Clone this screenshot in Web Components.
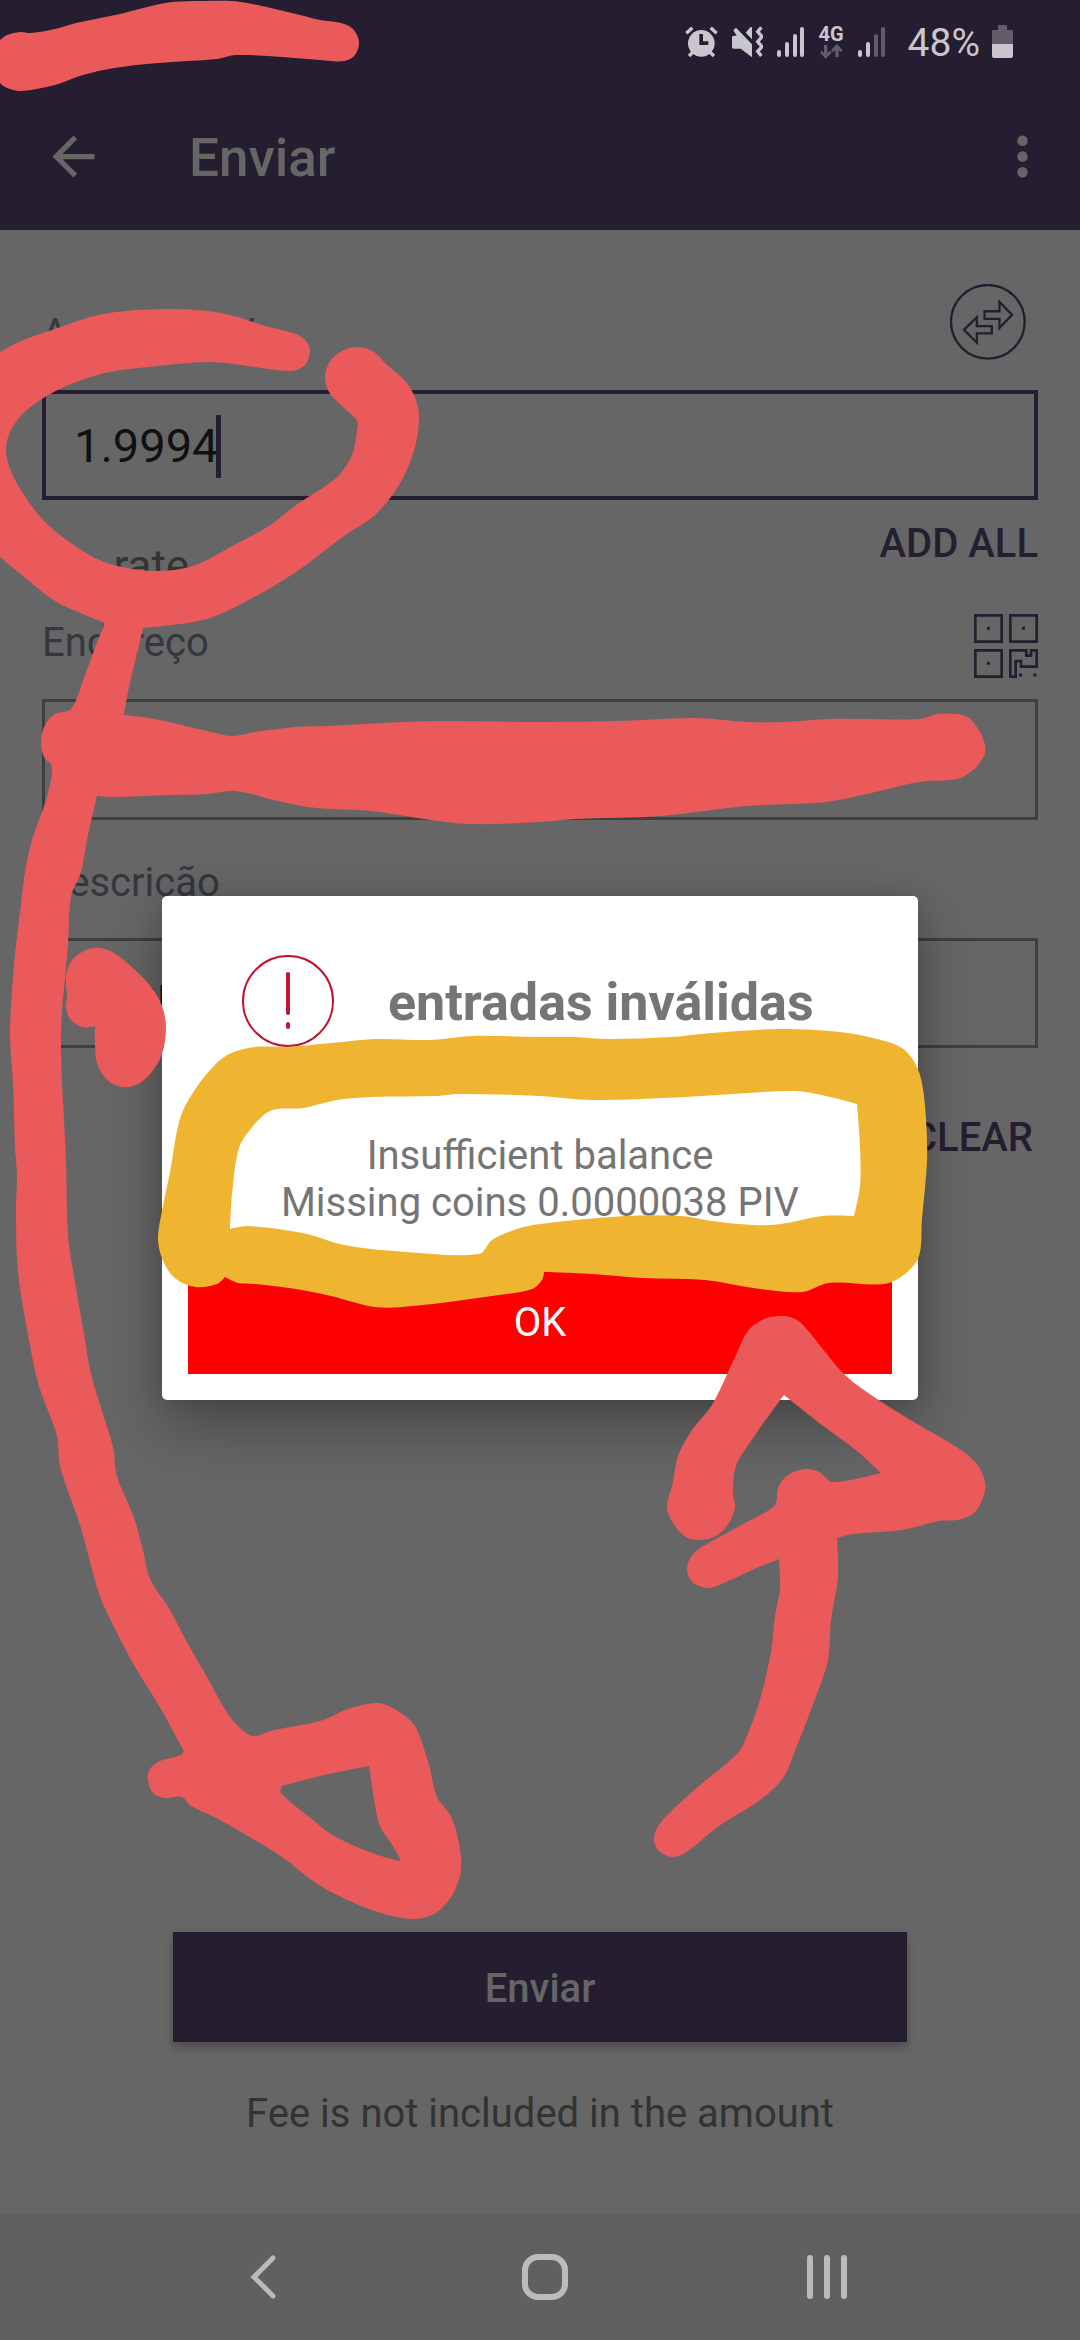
<!DOCTYPE html>
<html lang="pt">
<head>
<meta charset="utf-8">
<meta name="viewport" content="width=device-width, initial-scale=1">
<title>Enviar</title>
<style>
  body {
    margin: 0;
    font-family: Roboto, "Liberation Sans", sans-serif;
    background: #666;
  }
</style>
</head>
<body>
<send-screen></send-screen>

<script>
class StatusBar extends HTMLElement {
    constructor() {
        super();
        this.attachShadow({ mode: 'open' });
    }

    connectedCallback() {
        this.shadowRoot.innerHTML = `
      <style>
        :host {
          display: flex;
          align-items: center;
          justify-content: flex-end;
          height: 83px;
          padding-right: 67px;
          color: #cac6ce;
          background: #251e31;
        }

        svg {
          display: block;
          fill: currentColor;
        }

        .icons {
          display: flex;
          align-items: center;
          gap: 14px;
        }

        .net {
          display: flex;
          flex-direction: column;
          align-items: center;
          font-size: 20px;
          font-weight: 700;
          line-height: 20px;
        }

        .level {
          margin: 0 12px 0 23px;
          padding-top: 2px;
          font-size: 39px;
          line-height: 48px;
        }

        .off {
          fill: #635c6c;
        }
      </style>

      <div class="icons">
        <svg width="33" height="32" viewBox="0 0 99 96">
          <circle cx="49" cy="52" r="40"/>
          <path d="M4 22 22 5M77 5l18 17M12 90l12-12M74 78l13 12" fill="none" stroke="currentColor" stroke-width="10"/>
          <path d="M43 24h11v22h16v11H43z" fill="#251e31"/>
        </svg>
        <svg width="31" height="32" viewBox="0 0 93 96">
          <path d="M0 34q0-5 5-5h9l-10-16 8-8 48 50v39L26 68H5q-5 0-5-5zM41 20 55 4q5-3 5 3v33z"/>
          <path d="M88 4 77 17l13 15-13 15 13 15-13 14 11 14" fill="none" stroke="currentColor" stroke-width="10"/>
        </svg>
        <svg width="27" height="32" viewBox="0 0 27 32">
          <rect x="0" y="24" width="4" height="7" rx="2"/>
          <rect x="8" y="16" width="4" height="15" rx="2"/>
          <rect x="16" y="8" width="4" height="23" rx="2"/>
          <rect x="23" y="1" width="4" height="30" rx="2"/>
        </svg>
        <div class="net">4G
          <svg class="off" width="23" height="15" viewBox="0 0 69 45">
            <path d="M12 3h10v24l8-7 5 6-18 18L0 26l5-6 7 7zM46 39h10V18l7 7 5-6L51 0 33 19l5 6 8-7z"/>
          </svg>
        </div>
        <svg width="27" height="32" viewBox="0 0 27 32">
          <rect x="0" y="24" width="4" height="7" rx="2"/>
          <rect x="8" y="16" width="4" height="15" rx="2"/>
          <rect class="off" x="16" y="8" width="4" height="23" rx="2"/>
          <rect class="off" x="23" y="1" width="4" height="30" rx="2"/>
        </svg>
      </div>
      <span class="level">48%</span>
      <svg width="21" height="34" viewBox="0 0 21 34">
        <path class="off" d="M7 0h7q1 0 1 1v4h5q1 0 1 1v14H0V6q0-1 1-1h5V1q0-1 1-1z"/>
        <path d="M0 19h21v12q0 2-2 2H2q-2 0-2-2z"/>
      </svg>
    `;
    }
}

class AppBar extends HTMLElement {
    constructor() {
        super();
        this.attachShadow({ mode: 'open' });
    }

    connectedCallback() {
        this.shadowRoot.innerHTML = `
      <style>
        :host {
          display: flex;
          align-items: center;
          height: 147px;
          padding: 0 26px 0 42px;
          color: #666;
          background: #251e31;
        }

        button {
          display: block;
          padding: 0;
          border: 0;
          color: inherit;
          background: none;
        }

        svg {
          display: block;
          fill: currentColor;
        }

        h1 {
          flex: 1;
          margin: 0 0 0 84px;
          padding-top: 3px;
          font-size: 53px;
          font-weight: 500;
          line-height: 64px;
        }
      </style>

      <button type="button" aria-label="Voltar">
        <svg width="63" height="63" viewBox="0 0 24 24"><path d="M20 11H7.83l5.59-5.59L12 4l-8 8 8 8 1.410-1.410L7.830 13H20z"/></svg>
      </button>
      <h1><slot></slot></h1>
      <button type="button" aria-label="Mais opções">
        <svg width="63" height="63" viewBox="0 0 24 24"><path d="M12 8a2 2 0 100-4 2 2 0 000 4zm0 2a2 2 0 100 4 2 2 0 000-4zm0 6a2 2 0 100 4 2 2 0 000-4z"/></svg>
      </button>
    `;
    }
}

class FormField extends HTMLElement {
    constructor() {
        super();
        this.attachShadow({ mode: 'open' });
    }

    connectedCallback() {
        const value = this.getAttribute('value') || '';
        const active = this.hasAttribute('active');

        this.shadowRoot.innerHTML = `
      <style>
        :host {
          display: block;
        }

        .head {
          display: flex;
          align-items: flex-start;
          justify-content: space-between;
          margin-bottom: var(--head-gap, 29px);
        }

        label {
          padding-top: var(--label-top, 3px);
          font-size: 40px;
          line-height: 52px;
          color: #34373f;
        }

        .box {
          display: flex;
          align-items: center;
          box-sizing: border-box;
          height: var(--box-height, 110px);
          padding: 2px 29px 0;
          border: 3px solid #3f3f3f;
        }

        input {
          flex: 1;
          min-width: 0;
          padding: 0;
          border: 0;
          outline: 0;
          font: 47px/64px Roboto, "Liberation Sans", sans-serif;
          color: #111;
          background: none;
        }

        :host([active]) .box {
          padding: 2px 28px 0;
          border: 4px solid #251e31;
        }

        :host([active]) input {
          flex: none;
          field-sizing: content;
        }

        .caret {
          width: 5px;
          height: 63px;
          margin-left: -2px;
          background: #251e31;
        }
      </style>

      <div class="head">
        <label for="field">${this.getAttribute('label')}</label>
        <slot></slot>
      </div>
      <div class="box">
        <input type="text" id="field" value="${value}">
        ${active ? '<span class="caret"></span>' : ''}
      </div>
    `;
    }
}

class ErrorDialog extends HTMLElement {
    constructor() {
        super();
        this.attachShadow({ mode: 'open' });
    }

    connectedCallback() {
        this.shadowRoot.innerHTML = `
      <style>
        :host {
          display: block;
          box-sizing: border-box;
          width: 70%;
          padding: 59px 26px 26px;
          border-radius: 5px;
          color: #757575;
          background: #fff;
          box-shadow: 0 24px 60px rgba(0,0,0,0.32), 0 0 24px rgba(0,0,0,0.1);
        }

        header {
          display: flex;
          align-items: center;
          gap: 54px;
          padding-left: 54px;
        }

        svg {
          display: block;
          fill: none;
          stroke: #c0142f;
        }

        h2 {
          margin: 0;
          padding-top: 3px;
          font-size: 52px;
          font-weight: 700;
          line-height: 64px;
        }

        p {
          margin: 85px 0 44px;
          font-size: 40px;
          line-height: 47px;
          text-align: center;
        }

        button {
          display: block;
          width: 100%;
          height: 104px;
          padding: 2px 0 0;
          border: 0;
          font: 40px/56px Roboto, "Liberation Sans", sans-serif;
          color: #fff;
          background: #f00;
        }
      </style>

      <header>
        <svg width="92" height="92" viewBox="0 0 92 92">
          <circle cx="46" cy="46" r="45" stroke-width="2"/>
          <path d="M46 19v39M46 69v3" stroke-width="4" stroke-linecap="round"/>
        </svg>
        <h2><slot name="title"></slot></h2>
      </header>
      <p><slot></slot></p>
      <button type="button">OK</button>
    `;
        this.shadowRoot.querySelector('button').addEventListener('click', () => this.remove());
    }
}

class NavBar extends HTMLElement {
    constructor() {
        super();
        this.attachShadow({ mode: 'open' });
    }

    connectedCallback() {
        this.shadowRoot.innerHTML = `
      <style>
        :host {
          display: flex;
          align-items: center;
          justify-content: center;
          height: 126px;
          padding-left: 10px;
          color: #bbb;
          background: #606060;
        }

        button {
          display: flex;
          justify-content: center;
          width: 282px;
          padding: 0;
          border: 0;
          color: inherit;
          background: none;
        }

        svg {
          fill: none;
          stroke: currentColor;
          stroke-linecap: round;
        }
      </style>

      <button type="button" aria-label="Voltar">
        <svg width="26" height="46" viewBox="0 0 26 46"><path d="M23 4 4 23l19 19" stroke-width="5"/></svg>
      </button>
      <button type="button" aria-label="Início">
        <svg width="46" height="46" viewBox="0 0 46 46"><rect x="3" y="3" width="40" height="40" rx="13" stroke-width="6"/></svg>
      </button>
      <button type="button" aria-label="Recentes">
        <svg width="42" height="46" viewBox="0 0 42 46"><path d="M4 4v38M21 4v38M38 4v38" stroke-width="6"/></svg>
      </button>
    `;
    }
}

// Outlines of the marker strokes, as closed loops of x,y pairs
const RED = [
    '-8,44 0,40 7,35 20,32 31,33 55,29 76,23 120,14 151,6 172,2 205,1 241,2 296,14 320,20 341,23 353,29 359,42 355,55 344,61 320,60 282,57 236,55 217,59 158,63 114,68 83,75 55,85 21,91 7,88 0,83 -8,74',
    '-8,356 0,352 21,341 52,330 103,314 165,309 207,311 234,316 262,325 296,334 306,341 310,351 305,365 291,371 255,367 210,362 148,367 110,372 79,381 52,393 28,409 12,428 6,448 10,469 26,498 48,525 83,551 110,564 152,571 193,566 234,545 269,526 296,505 327,485 341,473 352,455 356,437 357,421 344,408 329,392 325,376 331,360 344,350 358,347 374,352 386,364 406,382 416,400 419,419 414,451 399,485 375,515 344,536 293,574 241,604 203,620 143,628 138,650 129,687 124,715 155,719 207,731 232,736 255,732 296,727 327,726 365,724 434,721 540,722 619,721 695,718 747,722 784,722 829,719 919,719 938,714 957,714 969,718 980,732 985,745 984,756 972,771 957,779 919,782 871,793 826,802 747,806 661,816 574,819 540,822 468,824 424,819 372,811 317,808 282,802 236,791 207,794 172,795 110,797 97,796 87,840 81,872 71,897 68,944 61,1036 66,1161 68,1236 74,1276 85,1340 91,1374 102,1411 113,1447 117,1476 134,1518 143,1550 150,1579 169,1608 188,1644 207,1677 226,1711 238,1726 253,1736 274,1730 320,1721 351,1708 377,1703 391,1707 411,1721 418,1732 429,1765 437,1797 449,1813 456,1830 461,1857 460,1876 451,1897 434,1914 410,1919 372,1910 337,1895 313,1881 282,1857 220,1820 191,1806 182,1797 165,1798 153,1793 148,1780 150,1769 160,1761 181,1755 184,1751 158,1704 134,1665 103,1604 93,1573 81,1528 60,1466 57,1436 39,1386 29,1340 18,1272 16,1211 17,1176 15,1147 13,1083 10,1033 14,965 21,904 25,872 32,840 46,800 52,767 44,757 41,741 45,725 55,714 71,709 84,678 95,648 105,623 83,614 55,601 29,581 0,557 -8,550',
    '282,1786 324,1775 369,1766 374,1799 380,1826 391,1843 400,1859 399,1861 375,1854 334,1836 313,1820 281,1793',
    '66,976 72,960 86,950 100,948 114,953 134,969 152,988 162,1006 166,1027 162,1054 150,1074 136,1085 122,1087 107,1080 97,1063 95,1044 95,1026 83,1027 71,1020 66,1008 67,997',
    '780,1316 764,1319 748,1331 735,1357 712,1405 692,1430 678,1456 673,1482 667,1507 673,1523 686,1537 700,1540 716,1536 729,1523 735,1507 733,1494 736,1466 753,1438 778,1403 784,1395 822,1425 857,1451 881,1473 833,1482 819,1472 805,1469 788,1475 778,1488 775,1505 747,1522 712,1541 695,1552 688,1563 688,1575 695,1584 709,1588 726,1582 750,1571 779,1559 780,1588 775,1616 771,1652 759,1703 743,1745 735,1756 692,1792 661,1822 654,1838 659,1851 673,1857 688,1851 719,1826 760,1800 783,1778 795,1751 815,1699 828,1660 831,1620 838,1577 837,1538 853,1534 902,1530 939,1521 957,1520 974,1513 984,1495 985,1482 977,1464 958,1448 919,1425 877,1399 846,1376 826,1353 803,1325 793,1318'
];
const YELLOW = [
    '255,1047 286,1047 331,1043 375,1039 430,1040 472,1036 540,1037 574,1037 609,1039 671,1037 712,1033 781,1029 840,1032 877,1039 902,1048 915,1063 922,1083 926,1119 927,1161 922,1219 919,1256 905,1274 884,1284 829,1283 802,1292 753,1288 705,1280 643,1278 592,1274 544,1272 542,1280 532,1289 492,1296 413,1306 375,1307 331,1296 296,1289 255,1284 238,1283 225,1277 217,1284 196,1287 176,1279 164,1263 158,1240 162,1211 170,1172 179,1122 189,1099 210,1070 229,1054',
    '270,1111 303,1108 337,1100 372,1097 437,1096 458,1094 540,1096 592,1100 685,1097 733,1094 795,1091 826,1096 857,1104 860,1147 860,1186 854,1216 822,1216 781,1224 753,1225 712,1221 681,1216 626,1216 540,1224 517,1229 492,1240 479,1254 406,1252 344,1245 303,1233 248,1226 230,1229 232,1194 238,1151 246,1135'
];

// closed curve through every point of the loop; sharp turns stay sharp
function smoothLoop(loop) {
    const pts = loop.split(' ').map(p => p.split(',').map(Number));
    const n = pts.length;
    const handle = pts.map((p, i) => {
        const a = pts[(i + n - 1) % n];
        const c = pts[(i + 1) % n];
        const before = Math.hypot(p[0] - a[0], p[1] - a[1]);
        const after = Math.hypot(c[0] - p[0], c[1] - p[1]);
        const cos = ((p[0] - a[0]) * (c[0] - p[0]) + (p[1] - a[1]) * (c[1] - p[1])) / (before * after);
        if (cos < 0.5) return [0, 0];
        const k = 1 / (before + after) / 3;
        return [(c[0] - a[0]) * k, (c[1] - a[1]) * k];
    });
    let d = `M${pts[0]}`;
    for (let i = 0; i < n; i++) {
        const j = (i + 1) % n;
        const b = pts[i];
        const c = pts[j];
        const len = Math.hypot(c[0] - b[0], c[1] - b[1]);
        d += `C${b[0] + handle[i][0] * len},${b[1] + handle[i][1] * len} ${c[0] - handle[j][0] * len},${c[1] - handle[j][1] * len} ${c}`;
    }
    return d + 'Z';
}

class MarkerLayer extends HTMLElement {
    constructor() {
        super();
        this.attachShadow({ mode: 'open' });
    }

    connectedCallback() {
        this.shadowRoot.innerHTML = `
      <style>
        :host {
          display: block;
          pointer-events: none;
        }

        svg {
          display: block;
          width: 100%;
          height: 100%;
        }
      </style>

      <svg viewBox="0 0 1080 2340" preserveAspectRatio="none" fill-rule="evenodd" aria-hidden="true">
        <path fill="#eb5a5a" d="${RED.map(smoothLoop).join('')}"/>
        <path fill="#efb430" d="${YELLOW.map(smoothLoop).join('')}"/>
      </svg>
    `;
    }
}

class SendScreen extends HTMLElement {
    constructor() {
        super();
        this.attachShadow({ mode: 'open' });
    }

    connectedCallback() {
        this.shadowRoot.innerHTML = `
      <style>
        :host {
          display: flex;
          flex-direction: column;
          position: relative;
          min-height: 100vh;
          overflow: hidden;
        }

        main {
          display: flex;
          flex: 1;
          flex-direction: column;
          padding: 54px 42px 72px;
        }

        button {
          padding: 0;
          border: 0;
          font: 500 40px/56px Roboto, "Liberation Sans", sans-serif;
          color: #251e31;
          background: none;
        }

        svg {
          display: block;
          fill: none;
          stroke: #251e31;
        }

        .amount {
          --head-gap: 30px;
          --label-top: 24px;
        }

        .swap {
          margin-right: 12px;
        }

        .hint {
          display: flex;
          align-items: flex-start;
          justify-content: space-between;
          padding: 16px 0 20px;
        }

        .rate {
          margin: 22px 0 0 4px;
          font-size: 44px;
          line-height: 56px;
          color: #333;
        }

        .address {
          --head-gap: 21px;
          --box-height: 121px;
          margin-bottom: 34px;
        }

        .clear {
          align-self: flex-end;
          margin: 62px 5px 0 0;
        }

        .send {
          height: 110px;
          margin: auto 131px 44px;
          padding-top: 4px;
          color: #666;
          background: #251e31;
          box-shadow: 0 5px 8px rgba(0,0,0,0.25);
        }

        .fee {
          margin: 0;
          font-size: 40px;
          line-height: 56px;
          text-align: center;
          color: #333;
        }

        .overlay {
          display: flex;
          align-items: center;
          justify-content: center;
          position: absolute;
          inset: 82px 0 126px;
        }

        marker-layer {
          position: absolute;
          inset: 0;
        }
      </style>

      <status-bar></status-bar>
      <app-bar>Enviar</app-bar>
      <main>
        <form-field class="amount" label="Amount PIV" value="1.9994" active>
          <button type="button" class="swap" aria-label="Trocar moeda">
            <svg width="76" height="76" viewBox="0 0 229 229" stroke-width="7">
              <circle cx="114" cy="114" r="111"/>
              <path d="M104 82h45V54l38 39-38 40v-28h-45zM126 127H81v-27l-39 38 39 39v-28h45z"/>
            </svg>
          </button>
        </form-field>
        <div class="hint">
          <span class="rate">No rate</span>
          <button type="button">ADD ALL</button>
        </div>
        <form-field class="address" label="Endereço">
          <button type="button" aria-label="Ler código QR">
            <svg width="64" height="64" viewBox="0 0 192 192" stroke-width="8">
              <path d="M4 4h79v79H4zM109 4h79v79h-79zM4 109h79v79H4zM109 109h48v16h14v-16h17v49h-47v-17h-16v47h-16z"/>
              <path d="M39 43h9M144 43h9M39 148h9M135 183h9M178 183h9" stroke-width="9"/>
            </svg>
          </button>
        </form-field>
        <form-field label="Descrição" value="Doar"></form-field>
        <button type="button" class="clear">CLEAR</button>
        <button type="button" class="send">Enviar</button>
        <p class="fee">Fee is not included in the amount</p>
      </main>
      <nav-bar></nav-bar>

      <div class="overlay">
        <error-dialog role="alertdialog">
          <span slot="title">entradas inválidas</span>
          Insufficient balance<br>Missing coins 0.0000038 PIV
        </error-dialog>
      </div>
      <marker-layer></marker-layer>
    `;
    }
}

customElements.define('status-bar', StatusBar);
customElements.define('app-bar', AppBar);
customElements.define('form-field', FormField);
customElements.define('error-dialog', ErrorDialog);
customElements.define('nav-bar', NavBar);
customElements.define('marker-layer', MarkerLayer);
customElements.define('send-screen', SendScreen);
</script>
</body>
</html>
